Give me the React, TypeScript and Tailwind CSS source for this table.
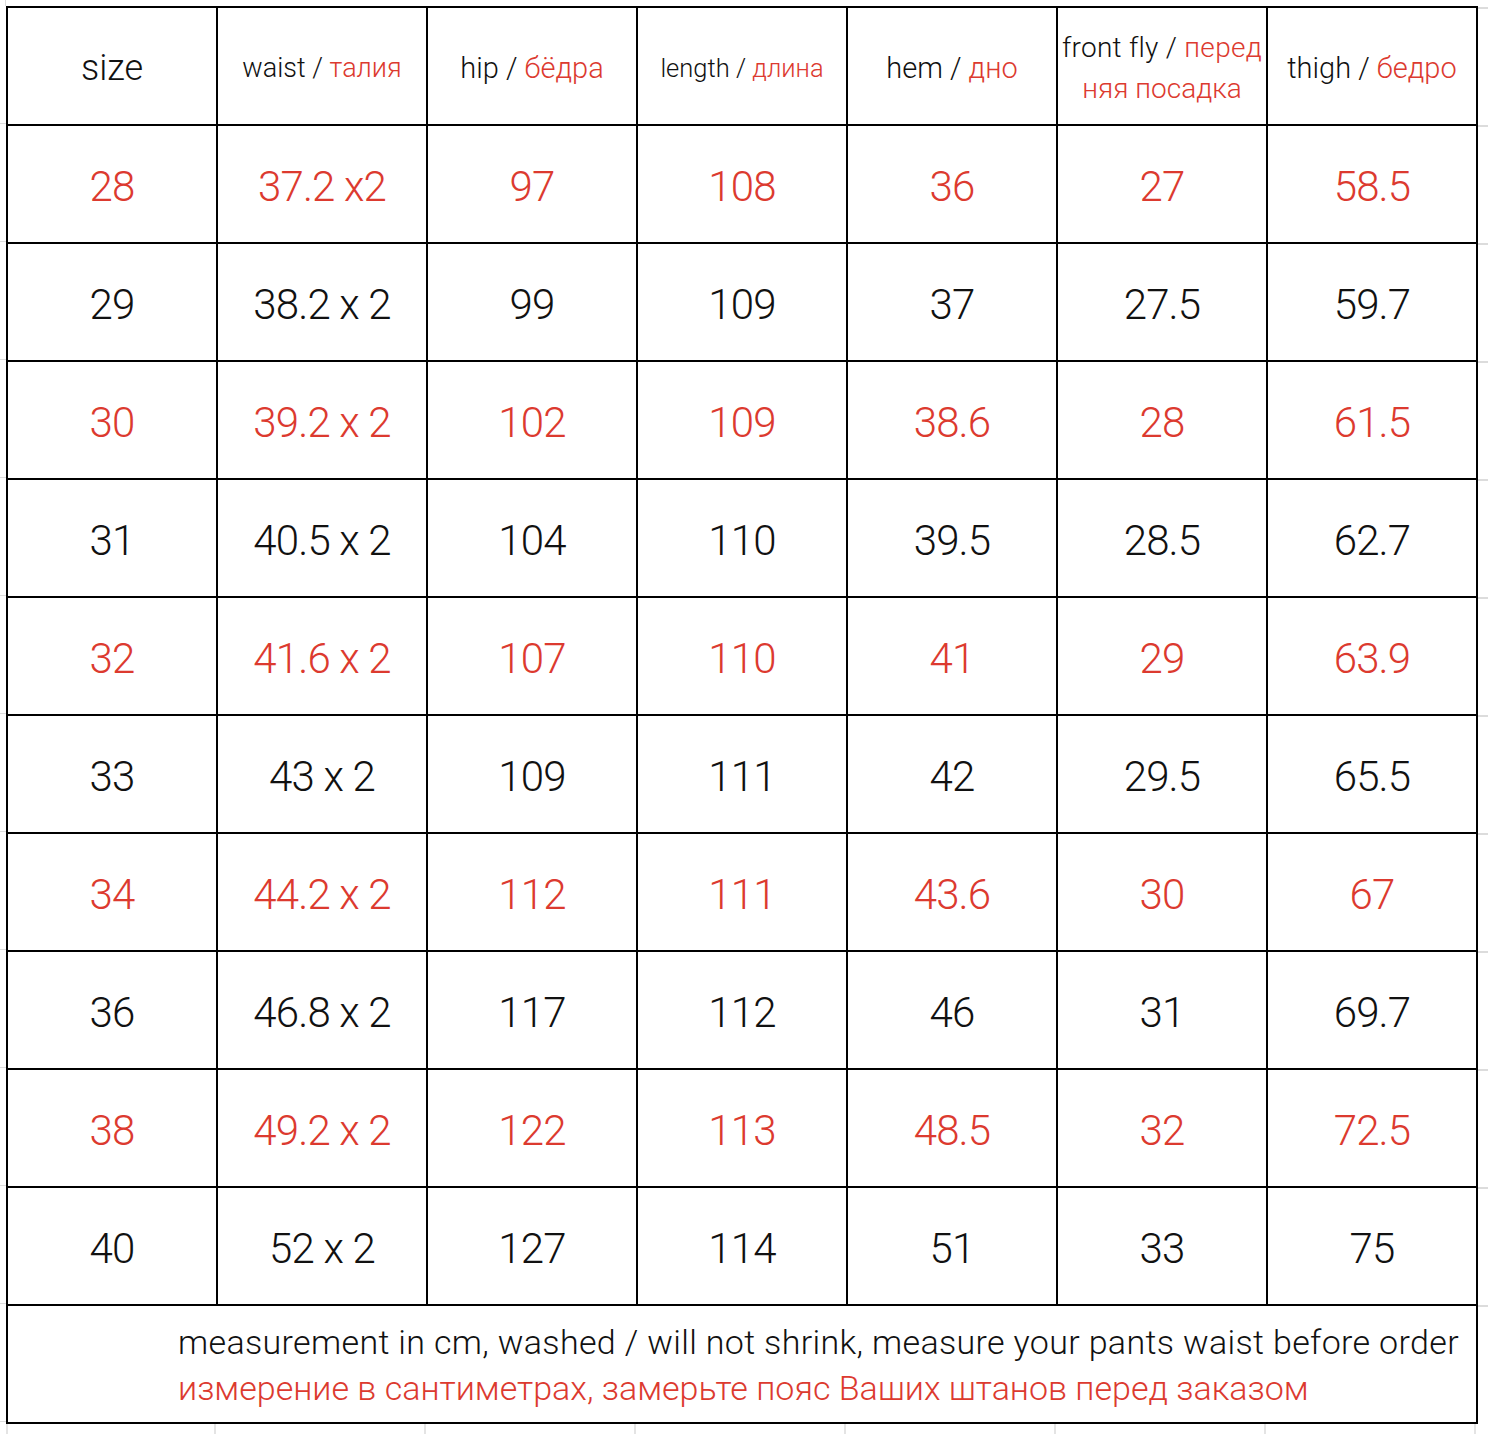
import React from 'react';

const RED = 'text-[#dc3a2f]';

const headers: { en: string; ru: string; size: string; wrap?: boolean }[] = [
  { en: 'waist', ru: 'талия', size: 'text-[27px]' },
  { en: 'hip', ru: 'бёдра', size: 'text-[29px]' },
  { en: 'length', ru: 'длина', size: 'text-[25.5px]' },
  { en: 'hem', ru: 'дно', size: 'text-[29px]' },
  { en: 'front fly', ru: 'перед', size: 'text-[28px]', wrap: true },
  { en: 'thigh', ru: 'бедро', size: 'text-[29px]' },
];

const rows = [
  ['28', '37.2 x2', '97', '108', '36', '27', '58.5'],
  ['29', '38.2 x 2', '99', '109', '37', '27.5', '59.7'],
  ['30', '39.2 x 2', '102', '109', '38.6', '28', '61.5'],
  ['31', '40.5 x 2', '104', '110', '39.5', '28.5', '62.7'],
  ['32', '41.6 x 2', '107', '110', '41', '29', '63.9'],
  ['33', '43 x 2', '109', '111', '42', '29.5', '65.5'],
  ['34', '44.2 x 2', '112', '111', '43.6', '30', '67'],
  ['36', '46.8 x 2', '117', '112', '46', '31', '69.7'],
  ['38', '49.2 x 2', '122', '113', '48.5', '32', '72.5'],
  ['40', '52 x 2', '127', '114', '51', '33', '75'],
];

const App = () => {
  return (
    <div
      className="w-[1488px] h-[1434px] bg-white flex flex-col overflow-hidden"
      style={{ fontFamily: 'Roboto, "Noto Sans", sans-serif' }}
    >
      <div className="flex">
        {/* spreadsheet margin left */}
        <div className="w-[6px] flex flex-col">
          <div className="h-[6px] border-r border-[#dcdcdc]" />
          {Array.from({ length: 12 }).map((_, i) => (
            <div key={i} className="h-[118px] border-b border-[#dcdcdc]" />
          ))}
        </div>

        <div className="flex flex-col pt-[6px]">
          <div className="w-[1472px] grid grid-cols-[repeat(7,208px)] auto-rows-[116px] gap-[2px] bg-black border-2 border-black font-light">
            <div className="bg-white flex items-center justify-center text-[36px] text-[#111] pt-1">size</div>
            {headers.map((h) => (
              <div
                key={h.en}
                className={`bg-white flex items-center justify-center text-center leading-[41px] text-[#111] pt-1 ${h.size}`}
              >
                {h.wrap ? (
                  <span>
                    <span className="tracking-[0.01em]">
                      {h.en} / <span className={RED}>{h.ru}</span>
                    </span>
                    <br />
                    <span className={RED}>няя посадка</span>
                  </span>
                ) : (
                  <span>
                    {h.en} / <span className={RED}>{h.ru}</span>
                  </span>
                )}
              </div>
            ))}

            {rows.map((r, i) =>
              r.map((v, j) => (
                <div
                  key={`${i}-${j}`}
                  className={`bg-white flex items-center justify-center text-[42px] tracking-[-0.02em] pt-1 ${
                    i % 2 === 0 ? RED : 'text-[#111]'
                  }`}
                >
                  {v}
                </div>
              ))
            )}

            <div className="col-span-7 bg-white flex flex-col justify-center pl-[170px] pt-[2px] text-[34px] leading-[46px] whitespace-nowrap">
              <span className="text-[#111] tracking-[0.01em]">
                measurement in cm, washed / will not shrink, measure your pants waist before order
              </span>
              <span className={RED}>
                измерение в сантиметрах, замерьте пояс Ваших штанов перед заказом
              </span>
            </div>
          </div>

          {/* spreadsheet gridlines below */}
          <div className="flex h-[12px]">
            {Array.from({ length: 7 }).map((_, i) => (
              <div key={i} className="w-[210px] border-r-2 border-[#e4e4e4] first:border-l-2" />
            ))}
          </div>
        </div>

        {/* spreadsheet margin right */}
        <div className="flex-1 flex flex-col">
          <div className="h-[7px]" />
          {Array.from({ length: 12 }).map((_, i) => (
            <div key={i} className="h-[118px] border-t-2 border-[#dcdcdc]" />
          ))}
        </div>
      </div>
    </div>
  );
};

export default App;
